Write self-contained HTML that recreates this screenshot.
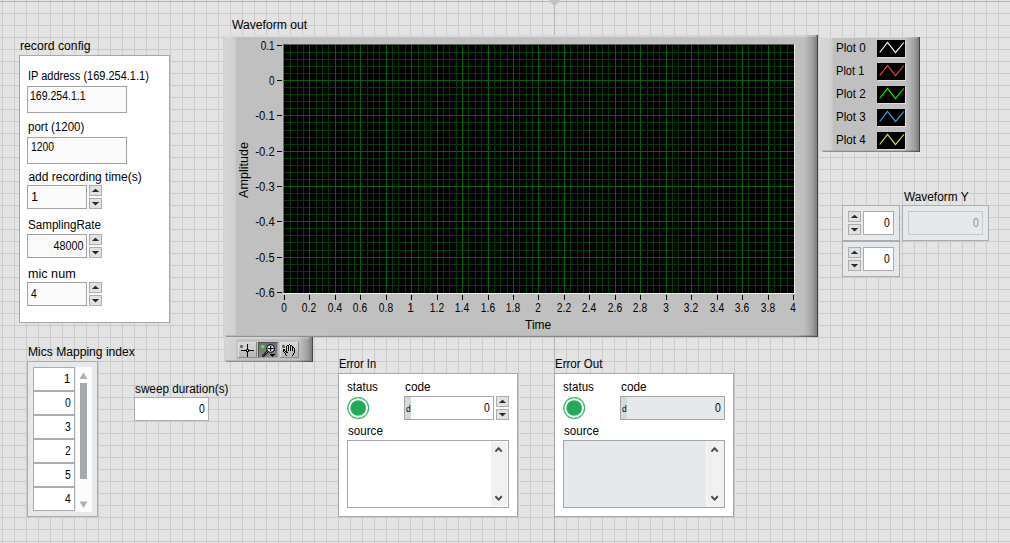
<!DOCTYPE html>
<html><head><meta charset="utf-8"><title>Front Panel</title>
<style>
html,body{margin:0;padding:0;}
body{width:1010px;height:543px;overflow:hidden;position:relative;font-family:"Liberation Sans",sans-serif;
background-color:#e3e3e3;
background-image:linear-gradient(to right,#cbcbcb 1px,transparent 1px),linear-gradient(to bottom,#cbcbcb 1px,transparent 1px);
background-size:12px 12px;background-position:2px 1px;}
.t{position:absolute;white-space:nowrap;font-size:12px;line-height:14px;color:#000;}
.b{position:absolute;box-sizing:border-box;}
svg{position:absolute;overflow:visible;}
</style></head><body>

<div class="b" style="left:554px;top:0px;width:1px;height:543px;background:#b4b4b4;"></div>
<div class="b" style="left:0px;top:1px;width:1010px;height:1px;background:#b5b5b5;"></div>
<svg style="left:0;top:0" width="1010" height="543"><polygon points="549.5,0 559.5,0 559.5,1.5 554.5,6 549.5,1.5" fill="#c3c3c3"/></svg>
<div class="t" style="top:39px;left:20.0px;transform-origin:0 0;transform:scaleX(1.017);">record config</div>
<div class="b" style="left:19px;top:55px;width:151px;height:268px;background:#fff;box-shadow:inset 0 0 0 1px #a6a9ac;"></div>
<div class="t" style="top:69px;left:28.4px;transform-origin:0 0;transform:scaleX(0.916);">IP address (169.254.1.1)</div>
<div class="b" style="left:27px;top:86px;width:100px;height:27px;background:#fafafa;box-shadow:inset 0 0 0 1px #a3a3a3;"></div>
<div class="t" style="top:89px;left:30.4px;transform-origin:0 0;transform:scaleX(0.877);">169.254.1.1</div>
<div class="t" style="top:120px;left:28.3px;transform-origin:0 0;transform:scaleX(0.959);">port (1200)</div>
<div class="b" style="left:27px;top:137px;width:100px;height:27px;background:#fafafa;box-shadow:inset 0 0 0 1px #a3a3a3;"></div>
<div class="t" style="top:140px;left:30.8px;transform-origin:0 0;transform:scaleX(0.861);">1200</div>
<div class="t" style="top:170px;left:28.4px;transform-origin:0 0;">add recording time(s)</div>
<div class="b" style="left:27px;top:185px;width:60px;height:24px;background:#fafafa;box-shadow:inset 0 0 0 1px #a3a3a3;"></div>
<div class="t" style="top:190px;left:31.2px;transform-origin:0 0;">1</div>
<div class="b" style="left:89px;top:185px;width:13px;height:11px;background:#e1e1e1;box-shadow:inset 0 0 0 1px #adadad;"></div><div class="b" style="left:89px;top:198px;width:13px;height:11px;background:#e1e1e1;box-shadow:inset 0 0 0 1px #adadad;"></div><svg style="left:0;top:0" width="1010" height="543"><polygon points="91.8,192.1 95.5,188.7 99.2,192.1" fill="#2b2b2b"/><polygon points="91.8,202.1 95.5,205.5 99.2,202.1" fill="#2b2b2b"/></svg>
<div class="t" style="top:218px;left:28.1px;transform-origin:0 0;transform:scaleX(0.968);">SamplingRate</div>
<div class="b" style="left:27px;top:234px;width:60px;height:24px;background:#fafafa;box-shadow:inset 0 0 0 1px #a3a3a3;"></div>
<div class="t" style="top:239px;right:926.7px;transform-origin:100% 0;transform:scaleX(0.895);">48000</div>
<div class="b" style="left:89px;top:234px;width:13px;height:11px;background:#e1e1e1;box-shadow:inset 0 0 0 1px #adadad;"></div><div class="b" style="left:89px;top:247px;width:13px;height:11px;background:#e1e1e1;box-shadow:inset 0 0 0 1px #adadad;"></div><svg style="left:0;top:0" width="1010" height="543"><polygon points="91.8,241.1 95.5,237.7 99.2,241.1" fill="#2b2b2b"/><polygon points="91.8,251.1 95.5,254.5 99.2,251.1" fill="#2b2b2b"/></svg>
<div class="t" style="top:267px;left:28.1px;transform-origin:0 0;transform:scaleX(1.051);">mic num</div>
<div class="b" style="left:27px;top:282px;width:60px;height:24px;background:#fafafa;box-shadow:inset 0 0 0 1px #a3a3a3;"></div>
<div class="t" style="top:287px;left:30.8px;transform-origin:0 0;transform:scaleX(0.866);">4</div>
<div class="b" style="left:89px;top:282px;width:13px;height:11px;background:#e1e1e1;box-shadow:inset 0 0 0 1px #adadad;"></div><div class="b" style="left:89px;top:295px;width:13px;height:11px;background:#e1e1e1;box-shadow:inset 0 0 0 1px #adadad;"></div><svg style="left:0;top:0" width="1010" height="543"><polygon points="91.8,289.1 95.5,285.7 99.2,289.1" fill="#2b2b2b"/><polygon points="91.8,299.1 95.5,302.5 99.2,299.1" fill="#2b2b2b"/></svg>
<div class="t" style="top:18px;left:232.0px;transform-origin:0 0;transform:scaleX(1.013);">Waveform out</div>
<div class="b" style="left:223px;top:35px;width:595px;height:302px;background:#c0c0c0;background:linear-gradient(to right,#cdcdcd 0px,#d5d5d5 1px,#d2d2d2 9px,#cdcdcd 12px,#c0c0c0 13.5px,#c0c0c0 581px,#b2b2b2 585px,#a2a2a2 589px,#8c8c8c 592px,#7c7c7c 594px,#444 594px,#444 595px);"></div>
<div class="b" style="left:224px;top:35px;width:592px;height:2px;background:linear-gradient(to right,#dedede,#d2d2d2 580px,#a8a8a8 592px);"></div>
<div class="b" style="left:225px;top:335px;width:592px;height:1px;background:linear-gradient(to right,#b8b8b8,#b0b0b0 570px,#808080);"></div>
<div class="b" style="left:226px;top:336px;width:592px;height:1px;background:linear-gradient(to right,#909090,#808080 570px,#4a4a4a);"></div>
<div class="b" style="left:283px;top:44px;width:512px;height:250px;background:#ececec;"></div>
<div class="b" style="left:283px;top:44px;width:511px;height:249px;background:#5a5a5a;"></div>
<div class="b" style="left:283px;top:45px;width:1px;height:248px;background:#6e6e6e;"></div>
<div class="b" style="left:284px;top:45px;width:510px;height:248px;background:#000;"></div>
<svg style="left:0;top:0" width="1010" height="543">
<path d="M290.5,45V293M297.5,45V293M303.5,45V293M316.5,45V293M322.5,45V293M328.5,45V293M341.5,45V293M348.5,45V293M354.5,45V293M367.5,45V293M373.5,45V293M379.5,45V293M392.5,45V293M398.5,45V293M405.5,45V293M418.5,45V293M424.5,45V293M430.5,45V293M443.5,45V293M449.5,45V293M456.5,45V293M468.5,45V293M475.5,45V293M481.5,45V293M494.5,45V293M500.5,45V293M507.5,45V293M519.5,45V293M526.5,45V293M532.5,45V293M545.5,45V293M551.5,45V293M558.5,45V293M570.5,45V293M577.5,45V293M583.5,45V293M596.5,45V293M602.5,45V293M608.5,45V293M621.5,45V293M628.5,45V293M634.5,45V293M647.5,45V293M653.5,45V293M659.5,45V293M672.5,45V293M678.5,45V293M685.5,45V293M698.5,45V293M704.5,45V293M710.5,45V293M723.5,45V293M729.5,45V293M736.5,45V293M748.5,45V293M755.5,45V293M761.5,45V293M774.5,45V293M780.5,45V293M787.5,45V293M284,52.5H794M284,59.5H794M284,66.5H794M284,73.5H794M284,87.5H794M284,94.5H794M284,101.5H794M284,108.5H794M284,122.5H794M284,130.5H794M284,137.5H794M284,144.5H794M284,158.5H794M284,165.5H794M284,172.5H794M284,179.5H794M284,193.5H794M284,200.5H794M284,207.5H794M284,214.5H794M284,228.5H794M284,235.5H794M284,242.5H794M284,250.5H794M284,264.5H794M284,271.5H794M284,278.5H794M284,285.5H794" stroke="#003c00" stroke-width="1" fill="none"/>
<path d="M309.5,45V293M335.5,45V293M360.5,45V293M386.5,45V293M411.5,45V293M437.5,45V293M462.5,45V293M488.5,45V293M513.5,45V293M538.5,45V293M564.5,45V293M589.5,45V293M615.5,45V293M640.5,45V293M666.5,45V293M691.5,45V293M717.5,45V293M742.5,45V293M768.5,45V293M284,80.5H794M284,115.5H794M284,151.5H794M284,186.5H794M284,221.5H794M284,257.5H794" stroke="#006400" stroke-width="1" fill="none"/>
<path d="M284.5,295V300M309.5,295V300M335.5,295V300M360.5,295V300M386.5,295V300M411.5,295V300M437.5,295V300M462.5,295V300M488.5,295V300M513.5,295V300M538.5,295V300M564.5,295V300M589.5,295V300M615.5,295V300M640.5,295V300M666.5,295V300M691.5,295V300M717.5,295V300M742.5,295V300M768.5,295V300M793.5,295V300M277,45.5H282M277,80.5H282M277,115.5H282M277,151.5H282M277,186.5H282M277,221.5H282M277,257.5H282M277,292.5H282" stroke="#000" stroke-width="1" fill="none"/>
</svg>
<div class="t" style="top:301px;left:233.5px;width:100px;text-align:center;transform-origin:50% 0;transform:scaleX(0.836);">0</div>
<div class="t" style="top:301px;left:258.5px;width:100px;text-align:center;transform-origin:50% 0;transform:scaleX(0.856);">0.2</div>
<div class="t" style="top:301px;left:284.5px;width:100px;text-align:center;transform-origin:50% 0;transform:scaleX(0.856);">0.4</div>
<div class="t" style="top:301px;left:309.5px;width:100px;text-align:center;transform-origin:50% 0;transform:scaleX(0.856);">0.6</div>
<div class="t" style="top:301px;left:335.5px;width:100px;text-align:center;transform-origin:50% 0;transform:scaleX(0.856);">0.8</div>
<div class="t" style="top:301px;left:360.5px;width:100px;text-align:center;transform-origin:50% 0;">1</div>
<div class="t" style="top:301px;left:386.5px;width:100px;text-align:center;transform-origin:50% 0;transform:scaleX(0.856);">1.2</div>
<div class="t" style="top:301px;left:411.5px;width:100px;text-align:center;transform-origin:50% 0;transform:scaleX(0.856);">1.4</div>
<div class="t" style="top:301px;left:437.5px;width:100px;text-align:center;transform-origin:50% 0;transform:scaleX(0.856);">1.6</div>
<div class="t" style="top:301px;left:462.5px;width:100px;text-align:center;transform-origin:50% 0;transform:scaleX(0.856);">1.8</div>
<div class="t" style="top:301px;left:487.5px;width:100px;text-align:center;transform-origin:50% 0;transform:scaleX(0.836);">2</div>
<div class="t" style="top:301px;left:513.5px;width:100px;text-align:center;transform-origin:50% 0;transform:scaleX(0.856);">2.2</div>
<div class="t" style="top:301px;left:538.5px;width:100px;text-align:center;transform-origin:50% 0;transform:scaleX(0.856);">2.4</div>
<div class="t" style="top:301px;left:564.5px;width:100px;text-align:center;transform-origin:50% 0;transform:scaleX(0.856);">2.6</div>
<div class="t" style="top:301px;left:589.5px;width:100px;text-align:center;transform-origin:50% 0;transform:scaleX(0.856);">2.8</div>
<div class="t" style="top:301px;left:615.5px;width:100px;text-align:center;transform-origin:50% 0;transform:scaleX(0.836);">3</div>
<div class="t" style="top:301px;left:640.5px;width:100px;text-align:center;transform-origin:50% 0;transform:scaleX(0.856);">3.2</div>
<div class="t" style="top:301px;left:666.5px;width:100px;text-align:center;transform-origin:50% 0;transform:scaleX(0.856);">3.4</div>
<div class="t" style="top:301px;left:691.5px;width:100px;text-align:center;transform-origin:50% 0;transform:scaleX(0.856);">3.6</div>
<div class="t" style="top:301px;left:717.5px;width:100px;text-align:center;transform-origin:50% 0;transform:scaleX(0.856);">3.8</div>
<div class="t" style="top:301px;left:742.5px;width:100px;text-align:center;transform-origin:50% 0;transform:scaleX(0.836);">4</div>
<div class="t" style="top:39px;right:735.4px;transform-origin:100% 0;transform:scaleX(0.838);">0.1</div>
<div class="t" style="top:74px;right:735.4px;transform-origin:100% 0;transform:scaleX(0.836);">0</div>
<div class="t" style="top:109px;right:735.4px;transform-origin:100% 0;transform:scaleX(0.937);">-0.1</div>
<div class="t" style="top:145px;right:735.4px;transform-origin:100% 0;transform:scaleX(0.937);">-0.2</div>
<div class="t" style="top:180px;right:735.4px;transform-origin:100% 0;transform:scaleX(0.937);">-0.3</div>
<div class="t" style="top:215px;right:735.4px;transform-origin:100% 0;transform:scaleX(0.937);">-0.4</div>
<div class="t" style="top:251px;right:735.4px;transform-origin:100% 0;transform:scaleX(0.937);">-0.5</div>
<div class="t" style="top:286px;right:735.4px;transform-origin:100% 0;transform:scaleX(0.937);">-0.6</div>
<div class="t" style="top:318px;left:488.2px;width:100px;text-align:center;transform-origin:50% 0;">Time</div>
<div class="t" style="left:244px;top:169.5px;width:0;height:0;"><div style="position:absolute;left:0;top:0;transform:translate(-50%,-50%) rotate(-90deg) scaleX(1.045);white-space:nowrap;">Amplitude</div></div>
<div class="b" style="left:224px;top:337px;width:89px;height:25px;background:#c0c0c0;background:linear-gradient(to right,#cdcdcd 0px,#d5d5d5 1px,#d2d2d2 9px,#cdcdcd 12px,#c0c0c0 13.5px,#c0c0c0 75px,#b2b2b2 79px,#a2a2a2 83px,#8c8c8c 86px,#7c7c7c 88px,#444 88px,#444 89px);"></div>
<div class="b" style="left:226px;top:337px;width:83px;height:2px;background:linear-gradient(to right,#d8d8d8,#cfcfcf 70px,#b0b0b0);"></div>
<div class="b" style="left:225px;top:360px;width:87px;height:1px;background:linear-gradient(to right,#b8b8b8,#b0b0b0 70px,#808080);"></div>
<div class="b" style="left:226px;top:361px;width:87px;height:1px;background:linear-gradient(to right,#909090,#808080 70px,#4a4a4a);"></div>
<div class="b" style="left:238px;top:342px;width:19px;height:16px;background:#c9c9c9;background:linear-gradient(to bottom,#d6d6d6 0%,#cdcdcd 50%,#bebebe 55%,#b8b8b8 100%);box-shadow:inset -1px -1px 0 #8a8a8a, inset 1px 1px 0 #e0e0e0;"></div>
<div class="b" style="left:258px;top:342px;width:20px;height:16px;background:#7e7e7e;background:linear-gradient(to bottom,#6a6a6a 0%,#787878 50%,#8c8c8c 100%);box-shadow:inset 1px 1px 0 #555, inset -1px -1px 0 #a2a2a2;"></div>
<div class="b" style="left:280px;top:342px;width:19px;height:16px;background:#c9c9c9;background:linear-gradient(to bottom,#d6d6d6 0%,#cdcdcd 50%,#bebebe 55%,#b8b8b8 100%);box-shadow:inset -1px -1px 0 #8a8a8a, inset 1px 1px 0 #e0e0e0;"></div>
<svg style="left:0;top:0" width="1010" height="543">
<rect x="240" y="345" width="3" height="3" rx="1" fill="#357535" opacity="0.9"/>
<path d="M241,350.5H254M247.5,344V357" stroke="#000" stroke-width="1" fill="none"/>
<rect x="246" y="349" width="3" height="3" rx="0.7" fill="#000"/><rect x="247" y="350" width="1" height="1" fill="#fff"/>
<circle cx="262.5" cy="346.5" r="2.6" fill="#3cd83c" opacity="0.35"/>
<rect x="261.2" y="345.2" width="2.7" height="2.7" rx="1.2" fill="#4cff4c"/>
<circle cx="270.6" cy="348.5" r="3.8" fill="#dcdcff" stroke="#000" stroke-width="1.1"/>
<circle cx="269.3" cy="347.2" r="1" fill="#fff"/>
<path d="M268,348.5H273.4M270.6,346V351" stroke="#000" stroke-width="1.2"/>
<path d="M267.3,351.8L262.6,356.5" stroke="#000" stroke-width="2.4"/>
<path d="M266.8,352.3L263,356.1" stroke="#e8e8e8" stroke-width="0.9" stroke-dasharray="1 0.8"/>
<path d="M270,354h5v1h-1v1h-1v1h-1v-1h-1v-1h-1z" fill="#000"/>
<rect x="282" y="345" width="3" height="3" rx="1" fill="#357535" opacity="0.9"/>
<path d="M289,344h1v1h-1zM287,345h1v1h-1zM288,345h1v1h-1zM290,345h1v1h-1zM291,345h1v1h-1zM286,346h1v1h-1zM288,346h1v1h-1zM290,346h1v1h-1zM292,346h1v1h-1zM286,347h1v1h-1zM288,347h1v1h-1zM290,347h1v1h-1zM292,347h1v1h-1zM293,347h1v1h-1zM286,348h1v1h-1zM288,348h1v1h-1zM290,348h1v1h-1zM292,348h1v1h-1zM294,348h1v1h-1zM283,349h1v1h-1zM284,349h1v1h-1zM286,349h1v1h-1zM288,349h1v1h-1zM290,349h1v1h-1zM292,349h1v1h-1zM294,349h1v1h-1zM283,350h1v1h-1zM284,350h1v1h-1zM286,350h1v1h-1zM288,350h1v1h-1zM290,350h1v1h-1zM292,350h1v1h-1zM294,350h1v1h-1zM283,351h1v1h-1zM285,351h1v1h-1zM286,351h1v1h-1zM294,351h1v1h-1zM284,352h1v1h-1zM286,352h1v1h-1zM287,352h1v1h-1zM294,352h1v1h-1zM285,353h1v1h-1zM293,353h1v1h-1zM285,354h1v1h-1zM293,354h1v1h-1zM286,355h1v1h-1zM292,355h1v1h-1z" fill="#000"/>
</svg>
<div class="b" style="left:820px;top:37px;width:100px;height:115px;background:#c0c0c0;background:linear-gradient(to right,#cdcdcd 0px,#d7d7d7 1px,#d3d3d3 9px,#cdcdcd 12px,#c0c0c0 13.5px,#c0c0c0 86px,#b2b2b2 90px,#a2a2a2 94px,#8c8c8c 97px,#7c7c7c 99px,#444 99px,#444 100px);"></div>
<div class="b" style="left:821px;top:37px;width:97px;height:1px;background:linear-gradient(to right,#dedede,#d2d2d2 84px,#a0a0a0 97px);"></div>
<div class="b" style="left:821px;top:150px;width:98px;height:1px;background:linear-gradient(to right,#b8b8b8,#b0b0b0 80px,#808080);"></div>
<div class="b" style="left:823px;top:151px;width:97px;height:1px;background:linear-gradient(to right,#909090,#808080 80px,#4a4a4a);"></div>
<div class="t" style="top:41px;left:835.7px;transform-origin:0 0;transform:scaleX(0.967);">Plot 0</div>
<div class="b" style="left:877px;top:40px;width:28px;height:17px;background:#000;box-shadow:1px 1px 0 #dedede;"></div>
<div class="t" style="top:64px;left:835.7px;transform-origin:0 0;transform:scaleX(0.925);">Plot 1</div>
<div class="b" style="left:877px;top:63px;width:28px;height:17px;background:#000;box-shadow:1px 1px 0 #dedede;"></div>
<div class="t" style="top:87px;left:835.7px;transform-origin:0 0;transform:scaleX(0.967);">Plot 2</div>
<div class="b" style="left:877px;top:86px;width:28px;height:17px;background:#000;box-shadow:1px 1px 0 #dedede;"></div>
<div class="t" style="top:110px;left:835.7px;transform-origin:0 0;transform:scaleX(0.967);">Plot 3</div>
<div class="b" style="left:877px;top:109px;width:28px;height:17px;background:#000;box-shadow:1px 1px 0 #dedede;"></div>
<div class="t" style="top:133px;left:835.7px;transform-origin:0 0;transform:scaleX(0.967);">Plot 4</div>
<div class="b" style="left:877px;top:132px;width:28px;height:17px;background:#000;box-shadow:1px 1px 0 #dedede;"></div>
<svg style="left:0;top:0" width="1010" height="543"><path d="M879.7,52.5L887.5,42.5L895.5,52.5L903.9,42.5" stroke="#ffffff" stroke-width="1.15" fill="none"/><path d="M879.7,75.5L887.5,65.5L895.5,75.5L903.9,65.5" stroke="#ff4040" stroke-width="1.15" fill="none"/><path d="M879.7,98.5L887.5,88.5L895.5,98.5L903.9,88.5" stroke="#00ff00" stroke-width="1.15" fill="none"/><path d="M879.7,121.5L887.5,111.5L895.5,121.5L903.9,111.5" stroke="#3fa9f5" stroke-width="1.15" fill="none"/><path d="M879.7,144.5L887.5,134.5L895.5,144.5L903.9,134.5" stroke="#d8ec5a" stroke-width="1.15" fill="none"/></svg>
<div class="t" style="top:190px;left:903.6px;transform-origin:0 0;transform:scaleX(0.988);">Waveform Y</div>
<div class="b" style="left:842px;top:205px;width:58px;height:36px;background:#e6e9ec;box-shadow:inset 0 0 0 1px #a9adb1;"></div>
<div class="b" style="left:842px;top:241px;width:58px;height:36px;background:#e6e9ec;box-shadow:inset 0 0 0 1px #a9adb1;"></div>
<div class="b" style="left:863px;top:211px;width:31px;height:24px;background:#fff;box-shadow:inset 0 0 0 1px #a9adb1;"></div>
<div class="b" style="left:863px;top:247px;width:31px;height:24px;background:#fff;box-shadow:inset 0 0 0 1px #a9adb1;"></div>
<div class="t" style="top:216px;right:120.6px;transform-origin:100% 0;transform:scaleX(0.866);">0</div>
<div class="t" style="top:252px;right:120.6px;transform-origin:100% 0;transform:scaleX(0.866);">0</div>
<div class="b" style="left:848px;top:211px;width:13px;height:11px;background:#e1e1e1;box-shadow:inset 0 0 0 1px #adadad;"></div><div class="b" style="left:848px;top:224px;width:13px;height:11px;background:#e1e1e1;box-shadow:inset 0 0 0 1px #adadad;"></div><svg style="left:0;top:0" width="1010" height="543"><polygon points="850.8,218.1 854.5,214.7 858.2,218.1" fill="#2b2b2b"/><polygon points="850.8,228.1 854.5,231.5 858.2,228.1" fill="#2b2b2b"/></svg>
<div class="b" style="left:848px;top:247px;width:13px;height:11px;background:#e1e1e1;box-shadow:inset 0 0 0 1px #adadad;"></div><div class="b" style="left:848px;top:260px;width:13px;height:11px;background:#e1e1e1;box-shadow:inset 0 0 0 1px #adadad;"></div><svg style="left:0;top:0" width="1010" height="543"><polygon points="850.8,254.1 854.5,250.7 858.2,254.1" fill="#2b2b2b"/><polygon points="850.8,264.1 854.5,267.5 858.2,264.1" fill="#2b2b2b"/></svg>
<div class="b" style="left:902px;top:205px;width:87px;height:36px;background:#e6e9ec;box-shadow:inset 0 0 0 1px #a9adb1;"></div>
<div class="b" style="left:908px;top:211px;width:75px;height:24px;background:#e5e7e9;box-shadow:inset 0 0 0 1px #c5c8cb;"></div>
<div class="t" style="top:216px;color:#8c8c8c;right:31.6px;transform-origin:100% 0;transform:scaleX(0.866);">0</div>
<div class="t" style="top:345px;left:28.4px;transform-origin:0 0;transform:scaleX(1.007);">Mics Mapping index</div>
<div class="b" style="left:27px;top:361px;width:71px;height:156px;background:#e6e9ec;box-shadow:inset 0 0 0 1px #a9adb1;"></div>
<div class="b" style="left:76px;top:367px;width:16px;height:145px;background:#fcfcfd;"></div>
<div class="b" style="left:33px;top:367px;width:42px;height:24px;background:#fff;box-shadow:inset 0 0 0 1px #a9adb1;"></div>
<div class="t" style="top:372px;right:939.6px;transform-origin:100% 0;">1</div>
<div class="b" style="left:33px;top:391px;width:42px;height:24px;background:#fff;box-shadow:inset 0 0 0 1px #a9adb1;"></div>
<div class="t" style="top:396px;right:939.6px;transform-origin:100% 0;transform:scaleX(0.866);">0</div>
<div class="b" style="left:33px;top:415px;width:42px;height:24px;background:#fff;box-shadow:inset 0 0 0 1px #a9adb1;"></div>
<div class="t" style="top:420px;right:939.6px;transform-origin:100% 0;transform:scaleX(0.866);">3</div>
<div class="b" style="left:33px;top:439px;width:42px;height:24px;background:#fff;box-shadow:inset 0 0 0 1px #a9adb1;"></div>
<div class="t" style="top:444px;right:939.6px;transform-origin:100% 0;transform:scaleX(0.866);">2</div>
<div class="b" style="left:33px;top:463px;width:42px;height:24px;background:#fff;box-shadow:inset 0 0 0 1px #a9adb1;"></div>
<div class="t" style="top:468px;right:939.6px;transform-origin:100% 0;transform:scaleX(0.866);">5</div>
<div class="b" style="left:33px;top:487px;width:42px;height:24px;background:#fff;box-shadow:inset 0 0 0 1px #a9adb1;"></div>
<div class="t" style="top:492px;right:939.6px;transform-origin:100% 0;transform:scaleX(0.866);">4</div>
<div class="b" style="left:80px;top:383px;width:7px;height:96px;background:#a6a8aa;"></div>
<svg style="left:0;top:0" width="1010" height="543"><polygon points="79.5,379 83.5,372.5 87.5,379" fill="#b0b0b0"/><polygon points="79.5,501.5 83.5,508 87.5,501.5" fill="#b0b0b0"/></svg>
<div class="t" style="top:382px;left:135.3px;transform-origin:0 0;transform:scaleX(0.980);">sweep duration(s)</div>
<div class="b" style="left:134px;top:397px;width:75px;height:24px;background:#fff;box-shadow:inset 0 0 0 1px #a9adb1;"></div>
<div class="t" style="top:402px;right:805.4px;transform-origin:100% 0;transform:scaleX(0.866);">0</div>
<div class="t" style="top:357px;left:339.3px;transform-origin:0 0;transform:scaleX(0.927);">Error In</div><div class="b" style="left:338px;top:373px;width:180px;height:144px;background:#fff;box-shadow:inset 0 0 0 1px #a6a9ac;"></div><div class="t" style="top:380px;left:347.2px;transform-origin:0 0;transform:scaleX(0.963);">status</div><div class="t" style="top:380px;left:404.8px;transform-origin:0 0;transform:scaleX(0.981);">code</div><svg style="left:0;top:0" width="1010" height="543"><circle cx="358.2" cy="408" r="10.4" fill="#fff" stroke="#35b86d" stroke-width="1.2"/><circle cx="358.2" cy="408" r="7.8" fill="#22ab57"/></svg><div class="b" style="left:404px;top:396px;width:90px;height:24px;background:#fff;box-shadow:inset 0 0 0 1px #a3a6a9;"></div><div class="b" style="left:405px;top:397px;width:6px;height:22px;background:#d6d9dc;"></div><div class="t" style="top:404px;font-size:9px;line-height:11px;left:405.7px;transform-origin:0 0;transform:scaleX(0.935);">d</div><div class="t" style="top:401px;right:520.5px;transform-origin:100% 0;transform:scaleX(0.866);">0</div><div class="b" style="left:496px;top:396px;width:13px;height:11px;background:#e1e1e1;box-shadow:inset 0 0 0 1px #adadad;"></div><div class="b" style="left:496px;top:409px;width:13px;height:11px;background:#e1e1e1;box-shadow:inset 0 0 0 1px #adadad;"></div><svg style="left:0;top:0" width="1010" height="543"><polygon points="498.8,403.1 502.5,399.7 506.2,403.1" fill="#2b2b2b"/><polygon points="498.8,413.1 502.5,416.5 506.2,413.1" fill="#2b2b2b"/></svg><div class="t" style="top:424px;left:348.2px;transform-origin:0 0;transform:scaleX(0.967);">source</div><div class="b" style="left:347px;top:440px;width:162px;height:68px;background:#fff;box-shadow:inset 0 0 0 1px #a3a6a9;"></div><div class="b" style="left:491px;top:442px;width:16px;height:64px;background:#f0f0f0;"></div><svg style="left:0;top:0" width="1010" height="543"><path d="M495.4,451.6L498.6,448.3L501.8,451.6M495.4,496.3L498.6,499.6L501.8,496.3" stroke="#4a4a4a" stroke-width="2" fill="none"/></svg>
<div class="t" style="top:357px;left:555.3px;transform-origin:0 0;transform:scaleX(0.961);">Error Out</div><div class="b" style="left:554px;top:373px;width:180px;height:144px;background:#fff;box-shadow:inset 0 0 0 1px #a6a9ac;"></div><div class="t" style="top:380px;left:563.2px;transform-origin:0 0;transform:scaleX(0.963);">status</div><div class="t" style="top:380px;left:620.8px;transform-origin:0 0;transform:scaleX(0.981);">code</div><svg style="left:0;top:0" width="1010" height="543"><circle cx="574.2" cy="408" r="10.4" fill="#fff" stroke="#35b86d" stroke-width="1.2"/><circle cx="574.2" cy="408" r="7.8" fill="#22ab57"/></svg><div class="b" style="left:620px;top:396px;width:105px;height:24px;background:#e6e9ec;box-shadow:inset 0 0 0 1px #a3a6a9;"></div><div class="b" style="left:621px;top:397px;width:6px;height:22px;background:#d6d9dc;"></div><div class="t" style="top:404px;font-size:9px;line-height:11px;left:621.7px;transform-origin:0 0;transform:scaleX(0.935);">d</div><div class="t" style="top:401px;right:289.5px;transform-origin:100% 0;transform:scaleX(0.866);">0</div><div class="t" style="top:424px;left:564.2px;transform-origin:0 0;transform:scaleX(0.967);">source</div><div class="b" style="left:563px;top:440px;width:162px;height:68px;background:#e6e9ec;box-shadow:inset 0 0 0 1px #a3a6a9;"></div><div class="b" style="left:706px;top:441px;width:18px;height:66px;background:#f0f0f0;border-left:1px solid #f8f9fa;"></div><svg style="left:0;top:0" width="1010" height="543"><path d="M711.4,451.6L714.6,448.3L717.8,451.6M711.4,496.3L714.6,499.6L717.8,496.3" stroke="#4a4a4a" stroke-width="2" fill="none"/></svg>
</body></html>
